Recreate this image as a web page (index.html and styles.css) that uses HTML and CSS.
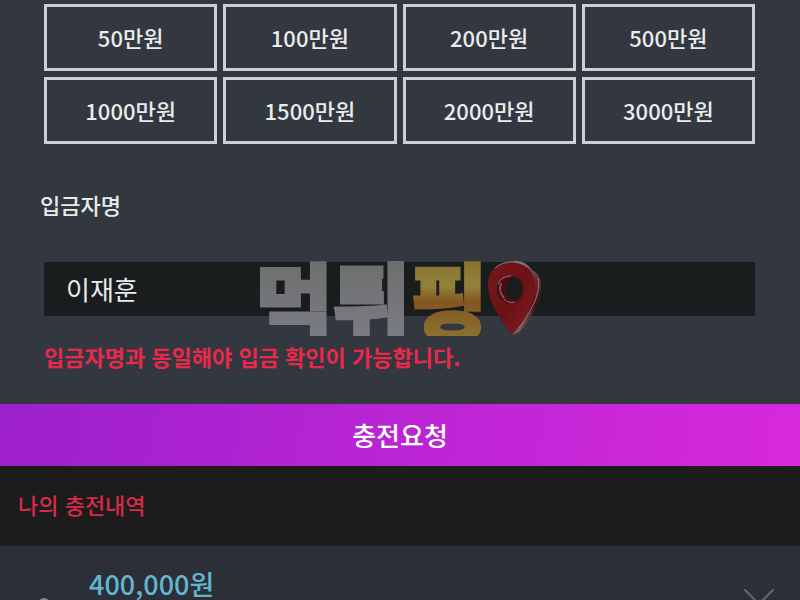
FILE: index.html
```html
<!DOCTYPE html>
<html lang="ko">
<head>
    <meta charset="UTF-8">
    <meta name="viewport" content="width=device-width, initial-scale=1.0">
    <title>충전요청</title>
    <link rel="stylesheet" href="styles.css">
</head>
<body>
    <form class="charge-form">
        <div class="amounts">
            <button type="button">50만원</button>
            <button type="button">100만원</button>
            <button type="button">200만원</button>
            <button type="button">500만원</button>
            <button type="button">1000만원</button>
            <button type="button">1500만원</button>
            <button type="button">2000만원</button>
            <button type="button">3000만원</button>
        </div>

        <label class="name-label" for="depositor">입금자명</label>
        <div class="name-field">
            <input type="text" id="depositor" value="이재훈">
            <div class="watermark">
                <span class="mark-gray">먹튀</span><span class="mark-gold">핑</span>
                <svg class="mark-pin" viewBox="0 0 56 76" aria-hidden="true">
                    <defs>
                        <linearGradient id="pinFace" x1="0" y1="0" x2="1" y2="1">
                            <stop offset="0" stop-color="#741a1d"/>
                            <stop offset="0.5" stop-color="#6b1013"/>
                            <stop offset="1" stop-color="#7e2125"/>
                        </linearGradient>
                        <linearGradient id="pinSide" x1="0" y1="0" x2="0" y2="1">
                            <stop offset="0" stop-color="#777577"/>
                            <stop offset="0.25" stop-color="#6b2a2e"/>
                            <stop offset="0.6" stop-color="#4a1014"/>
                            <stop offset="1" stop-color="#85676b"/>
                        </linearGradient>
                    </defs>
                    <path fill="url(#pinSide)" d="M26 1C34 0 41 4 45 10C51 13 54 19 54 26C53 44 42 62 32 72L25 75L44 20Z"/>
                    <path fill="url(#pinFace)" fill-rule="evenodd" d="M24 2C10 2 1 11 1 25C1 42 13 60 25 75C38 60 48 43 48 26C48 11 38 2 24 2ZM24 16C31 16 36 21 36 29C36 37 31 43 24 43C16 43 10 37 10 29C10 21 16 16 24 16Z"/>
                    <path fill="#4b0d11" fill-rule="evenodd" d="M24 16C31 16 36 21 36 29C36 37 31 43 24 43C16 43 10 37 10 29C10 21 16 16 24 16ZM27 18C22 18 19 23 19 29C19 35 22 40 27 40C32 40 35 35 35 29C35 23 32 18 27 18Z"/>
                    <path fill="none" stroke="#7b5559" stroke-width="2" d="M14 23C12 28 13 34 17 38"/>
                    <path fill="none" stroke="#8d7c7e" stroke-width="1" d="M11 24C13 19 18 16 24 16M17 39C20 42 23 43 28 42M8 8C17 0 31 0 40 7M51 18C54 31 46 49 32 68"/>
                </svg>
            </div>
        </div>
        <p class="notice">입금자명과 동일해야 입금 확인이 가능합니다.</p>

        <button type="submit" class="submit">충전요청</button>
    </form>

    <h2 class="history-title">나의 충전내역</h2>
    <div class="history-item">
        <span class="dot"></span>
        <span class="price">400,000원</span>
        <svg class="chevron" viewBox="0 0 32 18" aria-hidden="true">
            <path d="M2 2L16 16L30 2"/>
        </svg>
    </div>
</body>
</html>
```
FILE: styles.css
```css
* {
    box-sizing: border-box;
}

body {
    display: flex;
    flex-direction: column;
    margin: 0;
    height: 100vh;
    overflow: hidden;
    background: #33373f;
    color: #e9ebec;
    font-family: "Noto Sans CJK KR", sans-serif;
    font-size: 22px;
    font-weight: 500;
}

button,
input {
    font: inherit;
    color: inherit;
    border: none;
    border-radius: 0;
}

.charge-form {
    padding-top: 4px;
}

.amounts {
    display: grid;
    grid-template-columns: repeat(4, 1fr);
    gap: 6px;
    margin: 0 45px 0 44px;
}

.amounts button {
    height: 67px;
    padding: 0 0 2px;
    background: none;
    border: 3px solid #cdd1d3;
    cursor: pointer;
}

.name-label {
    display: block;
    margin: 44px 40px 0;
    line-height: 32px;
}

.name-field {
    position: relative;
    margin: 42px 45px 0 44px;
}

.name-field input {
    display: block;
    width: 100%;
    height: 54px;
    padding: 0 22px 2px;
    background: #1a1d1d;
    font-size: 26px;
    font-weight: 400;
}

/* logo laid over the name field */
.watermark {
    position: absolute;
    top: -2px;
    left: 50%;
    display: flex;
    align-items: center;
    height: 76px;
    transform: translateX(-50%);
    font-size: 84px;
    font-weight: 900;
    line-height: 76px;
    pointer-events: none;
}

.mark-gray,
.mark-gold {
    background: linear-gradient(#6d6e6f, #7b7c80);
    background-clip: text;
    -webkit-text-stroke: 3px transparent;
    color: transparent;
}

.mark-gold {
    background-image: linear-gradient(#87742c, #93803a 35%, #82571f 55%, #8a7030);
}

.mark-pin {
    width: 56px;
    height: 76px;
}

.notice {
    margin: 24px 44px 0;
    color: #e8294c;
    font-weight: 700;
    line-height: 32px;
}

.submit {
    display: block;
    width: 100%;
    height: 62px;
    margin-top: 32px;
    padding: 0 0 2px;
    background: linear-gradient(100deg, #9c20cc, #d829dc);
    color: #fff;
    font-size: 26px;
    cursor: pointer;
}

.history-title {
    margin: 0;
    padding: 0 18px 4px;
    background: #1c1c1c;
    color: #d92a47;
    font-size: 22px;
    font-weight: 500;
    line-height: 76px;
}

.history-item {
    display: flex;
    flex: 1;
    align-items: flex-start;
    min-height: 0;
    overflow: hidden;
    padding: 18px 25px 0 38px;
    background: #2c2f37;
}

.dot {
    width: 12px;
    height: 12px;
    margin: 34px 39px 0 0;
    border-radius: 50%;
    background: #85888c;
}

.price {
    color: #63b5d0;
    font-size: 27px;
    line-height: 40px;
}

.chevron {
    width: 32px;
    height: 18px;
    margin: 24px 0 0 auto;
    fill: none;
    stroke: #65686f;
    stroke-width: 2;
    stroke-linecap: round;
}
```
